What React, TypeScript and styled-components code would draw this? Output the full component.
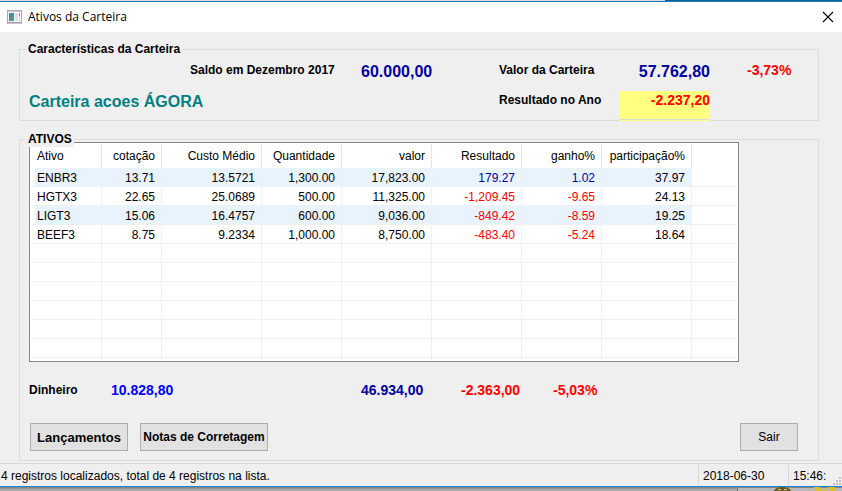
import React from "react";
import styled, { createGlobalStyle } from "styled-components";

const GlobalStyle = createGlobalStyle`
  * { box-sizing: border-box; }
  body {
    margin: 0;
    background: #efefef;
    color: #000;
    font: 12px/16px "Liberation Sans", Arial, sans-serif;
  }
`;

type Tone = "navy" | "blue" | "red" | "black";
const tones: Record<Tone, string> = {
  navy: "#0000a0",
  blue: "#0000ff",
  red: "#ff0000",
  black: "#000000",
};

const Window = styled.div`
  display: flex;
  flex-direction: column;
  min-height: 100vh;
`;

const TopEdge = styled.div`
  height: 2px;
  flex: none;
  border-bottom: 1px solid #1a7abf;
  background: linear-gradient(90deg, #d9d9d9 79%, #0a6396 79%);
`;

const TitleBar = styled.header`
  display: flex;
  align-items: center;
  gap: 6px;
  height: 30px;
  padding: 0 8px 0 7px;
  background: #fff;
`;

const Title = styled.h1`
  flex: 1;
  margin: 0;
  font: 400 12px/16px "Open Sans", "Noto Sans", sans-serif;
`;

const CloseButton = styled.button`
  display: flex;
  padding: 0;
  border: 0;
  background: none;
`;

const Body = styled.main`
  flex: 1;
  display: flex;
  flex-direction: column;
  gap: 11px;
  padding: 10px 23px 2px 19px;
`;

const Group = styled.fieldset`
  min-width: 0;
  margin: 0;
  padding: 0 79px 0 9px;
  border: 1px solid #dcdcdc;
`;

const Legend = styled.legend`
  position: relative;
  z-index: 1;
  margin-left: -3px;
  padding: 0 2px;
  background: #efefef;
  font-weight: 700;
  line-height: 15px;
`;

const Overview = styled.div`
  display: grid;
  grid-template-columns: 161px 171px minmax(80px, 1fr) 120px 91px 29px;
  grid-template-rows: 30px 34px;
  margin-top: 4px;
  height: 59px;
  line-height: 18px;
`;

const Label = styled.span`
  font-weight: 700;
  white-space: nowrap;
`;

const PortfolioName = styled.h2`
  grid-column: span 3;
  margin: 0;
  color: #008080;
  font-size: 16px;
  line-height: 22px;
`;

const Amount = styled.output<{ $tone: Tone; $large?: boolean; $end?: boolean }>`
  color: ${(p) => tones[p.$tone]};
  font-size: ${(p) => (p.$large ? 16 : 14)}px;
  font-weight: 700;
  line-height: ${(p) => (p.$large ? 22 : 18)}px;
  text-align: ${(p) => (p.$end ? "right" : "left")};
  white-space: nowrap;
`;

const Percent = styled(Amount)`
  padding-left: 37px;
`;

const Highlight = styled(Amount)`
  height: 30px;
  background: linear-gradient(#ffff80 28px, #dcdcdc 28px, #dcdcdc 29px, #ffff80 29px);
`;

const ListFrame = styled.div`
  margin-top: -5px;
  padding: 1px;
  border: 1px solid #828790;
  background: #fff;
`;

const Table = styled.table`
  width: 100%;
  table-layout: fixed;
  border-collapse: separate;
  border-spacing: 0;
`;

const Col = styled.col<{ $w?: number }>`
  width: ${(p) => (p.$w ? `${p.$w}px` : "auto")};
`;

const Head = styled.th<{ $start?: boolean }>`
  height: 24px;
  padding: 0 6px;
  border-right: 1px solid #e5e5e5;
  font-weight: 400;
  text-align: ${(p) => (p.$start ? "left" : "right")};
  white-space: nowrap;

  &:last-child { border-right: 0; }
`;

const Row = styled.tr<{ $striped?: boolean }>`
  td:not(:last-child) {
    background: ${(p) => (p.$striped ? "#e8f3fe" : "#fff")};
  }
  td:first-child {
    background: linear-gradient(90deg, #fff 4px, ${(p) => (p.$striped ? "#e8f3fe" : "#fff")} 4px);
  }
`;

const Cell = styled.td<{ $tone?: Tone; $start?: boolean }>`
  height: 19px;
  padding: 2px 6px 0;
  border-right: 1px solid #f0f0f0;
  border-bottom: 1px solid #f0f0f0;
  color: ${(p) => tones[p.$tone ?? "black"]};
  line-height: 16px;
  text-align: ${(p) => (p.$start ? "left" : "right")};

  &:last-child { border-right: 0; }
`;

const TailCell = styled.td`
  height: 2px;
  padding: 0;
  border-right: 1px solid #f0f0f0;

  &:last-child { border-right: 0; }
`;

const Totals = styled.div`
  display: grid;
  grid-template-columns: 82px minmax(80px, 1fr) 100px 92px 186px;
  margin-top: 19px;
  line-height: 18px;
`;

const Actions = styled.div`
  display: flex;
  gap: 12px;
  margin: 24px -59px 9px 1px;
`;

const Button = styled.button<{ $w: number; $size?: number; $bold?: boolean; $last?: boolean }>`
  width: ${(p) => p.$w}px;
  height: 28px;
  margin-left: ${(p) => (p.$last ? "auto" : "0")};
  padding: 0;
  border: 1px solid #adadad;
  background: #e1e1e1;
  color: #000;
  font-family: inherit;
  font-size: ${(p) => p.$size ?? 12}px;
  font-weight: ${(p) => (p.$bold ? 700 : 400)};
  white-space: nowrap;
`;

const StatusBar = styled.footer`
  display: flex;
  height: 23px;
  padding-top: 1px;
  border-top: 1px solid #d7d7d7;
  line-height: 22px;
`;

const StatusMessage = styled.span`
  flex: 1;
  padding-left: 1px;
`;

const StatusPart = styled.span<{ $w: number }>`
  width: ${(p) => p.$w}px;
  height: 20px;
  padding-left: 4px;
  border-left: 1px solid #d7d7d7;
`;

const Grip = styled.svg`
  align-self: flex-end;
  flex: none;
`;

const BottomEdge = styled.div`
  display: flex;
  justify-content: flex-end;
  height: 5px;
  border-top: 1px solid #1883d7;
  background: linear-gradient(#858585 1px, #a9a9a9 2px);
`;

const widths = [71, 60, 100, 80, 90, 90, 80, 90, undefined];
const headers = ["Ativo", "cotação", "Custo Médio", "Quantidade", "valor", "Resultado", "ganho%", "participação%", ""];
const assets = [
  ["ENBR3", "13.71", "13.5721", "1,300.00", "17,823.00", "179.27", "1.02", "37.97", ""],
  ["HGTX3", "22.65", "25.0689", "500.00", "11,325.00", "-1,209.45", "-9.65", "24.13", ""],
  ["LIGT3", "15.06", "16.4757", "600.00", "9,036.00", "-849.42", "-8.59", "19.25", ""],
  ["BEEF3", "8.75", "9.2334", "1,000.00", "8,750.00", "-483.40", "-5.24", "18.64", ""],
];
const emptyRows = [0, 1, 2, 3, 4, 5];

const toneOf = (column: number, value: string): Tone =>
  column === 5 || column === 6 ? (value.startsWith("-") ? "red" : "navy") : "black";

function AppIcon() {
  return (
    <svg width="15" height="14" viewBox="0 0 15 14" aria-hidden="true">
      <defs>
        <linearGradient id="pane" x1="0" y1="0" x2="1" y2="1">
          <stop offset="0" stopColor="#3f7fa8" />
          <stop offset="1" stopColor="#55a878" />
        </linearGradient>
      </defs>
      <rect x="0.5" y="0.5" width="14" height="12" fill="#f4f4f6" stroke="#a9abb3" />
      <path d="M1 1.5h13" stroke="#c9cbd2" />
      <path d="M0 13h15" stroke="#8d8f96" />
      <rect x="2" y="3" width="5" height="8" fill="url(#pane)" />
      <rect x="8" y="3" width="3" height="8" fill="#dfe0e6" />
      <rect x="12" y="3" width="1" height="3" fill="#5d9fa5" />
      <rect x="12" y="6" width="1" height="5" fill="#d5d8dd" />
    </svg>
  );
}

function ResizeGrip() {
  return (
    <Grip width="9" height="9" viewBox="0 0 9 9" fill="#bfbfbf" aria-hidden="true">
      <path d="M6 0h2v2H6zM3 3h2v2H3zM6 3h2v2H6zM0 6h2v2H0zM3 6h2v2H3zM6 6h2v2H6z" />
    </Grip>
  );
}

function DesktopSliver() {
  return (
    <svg width="105" height="4" viewBox="0 0 105 4" aria-hidden="true">
      <rect width="105" height="4" fill="#b9b9b9" />
      <path d="M0 0h105v1H0z" fill="#858585" />
      <path d="M0 0h1v4H0z" fill="#707070" />
      <path d="M37 4C38 1 41 0 45 0s8 1 9 4z" fill="#6b5a20" />
      <path d="M41 2h3v1h-3zM47 2h3v1h-3z" fill="#c9c29a" />
      <path d="M77 0h6l2 3 4-1 1 2H78zM91 0h6l2 1-1 3h-5z" fill="#d9c02c" />
    </svg>
  );
}

export default function App() {
  return (
    <Window>
      <GlobalStyle />
      <TopEdge />
      <TitleBar>
        <AppIcon />
        <Title>Ativos da Carteira</Title>
        <CloseButton type="button" aria-label="Fechar">
          <svg width="12" height="12" viewBox="0 0 12 12" stroke="#000" strokeWidth="1.1" aria-hidden="true">
            <path d="M1 1l10 10M11 1L1 11" />
          </svg>
        </CloseButton>
      </TitleBar>
      <Body>
        <Group>
          <Legend>Características da Carteira</Legend>
          <Overview>
            <span />
            <Label>Saldo em Dezembro 2017</Label>
            <Amount $tone="navy" $large>60.000,00</Amount>
            <Label>Valor da Carteira</Label>
            <Amount $tone="navy" $large $end>57.762,80</Amount>
            <Percent $tone="red">-3,73%</Percent>
            <PortfolioName>Carteira acoes ÁGORA</PortfolioName>
            <Label>Resultado no Ano</Label>
            <Highlight $tone="red" $end>-2.237,20</Highlight>
          </Overview>
        </Group>
        <Group>
          <Legend>ATIVOS</Legend>
          <ListFrame>
            <Table>
              <colgroup>
                {widths.map((w, i) => <Col key={i} $w={w} />)}
              </colgroup>
              <thead>
                <tr>
                  {headers.map((h, i) => <Head key={i} $start={i === 0}>{h}</Head>)}
                </tr>
              </thead>
              <tbody>
                {assets.map((row, r) => (
                  <Row key={row[0]} $striped={r % 2 === 0}>
                    {row.map((value, i) => (
                      <Cell key={i} $start={i === 0} $tone={toneOf(i, value)}>{value}</Cell>
                    ))}
                  </Row>
                ))}
                {emptyRows.map((r) => (
                  <Row key={r}>
                    {widths.map((_, i) => <Cell key={i} />)}
                  </Row>
                ))}
                <tr>
                  {widths.map((_, i) => <TailCell key={i} />)}
                </tr>
              </tbody>
            </Table>
          </ListFrame>
          <Totals>
            <Label>Dinheiro</Label>
            <Amount $tone="blue">10.828,80</Amount>
            <Amount $tone="navy">46.934,00</Amount>
            <Amount $tone="red">-2.363,00</Amount>
            <Amount $tone="red">-5,03%</Amount>
          </Totals>
          <Actions>
            <Button type="button" $w={98} $size={13} $bold>Lançamentos</Button>
            <Button type="button" $w={128} $bold>Notas de Corretagem</Button>
            <Button type="button" $w={58} $last>Sair</Button>
          </Actions>
        </Group>
      </Body>
      <StatusBar>
        <StatusMessage>4 registros localizados, total de 4 registros na lista.</StatusMessage>
        <StatusPart $w={90}>2018-06-30</StatusPart>
        <StatusPart $w={45}>15:46:</StatusPart>
        <ResizeGrip />
      </StatusBar>
      <BottomEdge>
        <DesktopSliver />
      </BottomEdge>
    </Window>
  );
}
